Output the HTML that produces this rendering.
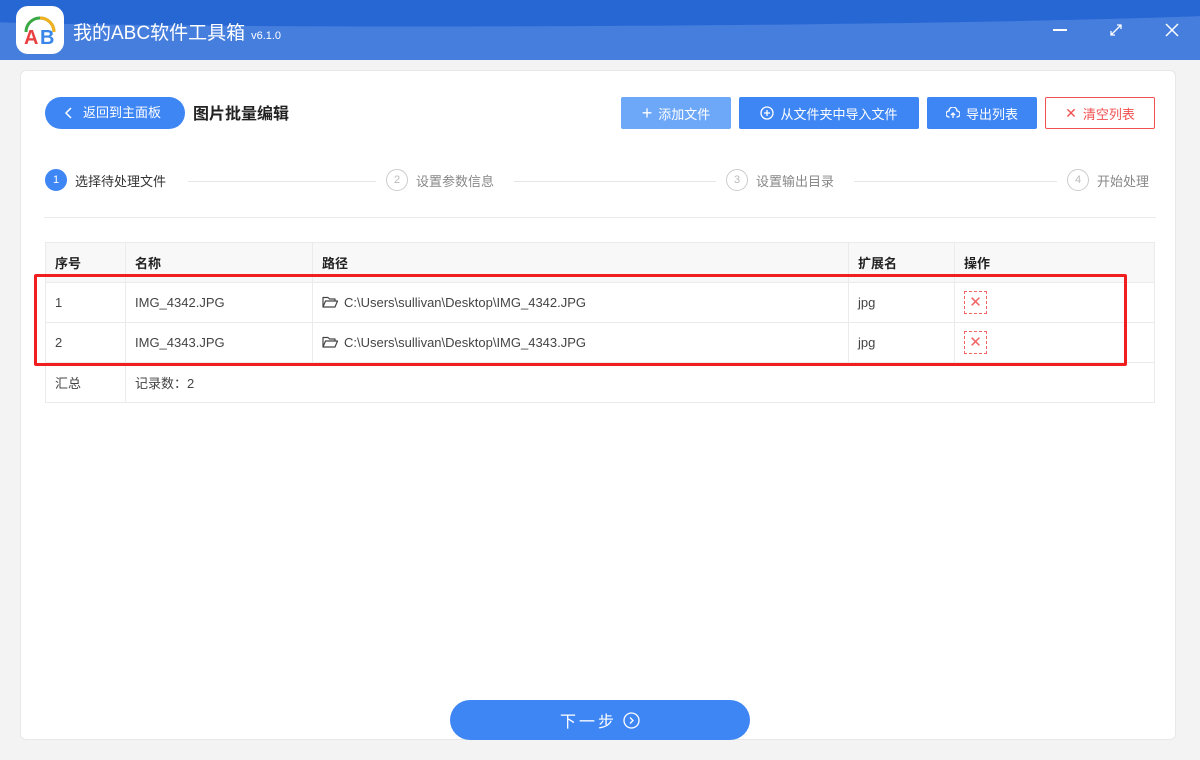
<!DOCTYPE html>
<html><head><meta charset="utf-8"><style>
*{margin:0;padding:0;box-sizing:border-box}
body{width:1200px;height:760px;background:#f3f3f3;font-family:"Liberation Sans","Noto Sans CJK SC",sans-serif;position:relative;overflow:hidden;font-size:13px;color:#333}
.hdr{position:absolute;left:0;top:0;width:1200px;height:60px;background:#467edd;overflow:hidden}
.hdr .band{position:absolute;left:-100px;top:-60px;width:1400px;height:86px;background:#2767d4;border-radius:0 0 50% 50%/0 0 14px 14px;transform:rotate(-0.3deg)}
.logo{position:absolute;left:16px;top:6px;width:48px;height:48px;background:#fff;border-radius:12px}
.title{position:absolute;left:73px;top:18px;color:#fff;font-size:19px}
.ver{font-size:11px;margin-left:6px}
.panel{position:absolute;left:20px;top:70px;width:1156px;height:670px;background:#fff;border:1px solid #e8e8e8;border-radius:6px}
.abs{position:absolute}
.btn{position:absolute;height:32px;top:97px;color:#fff;font-size:13px;display:flex;align-items:center;justify-content:center;border-radius:2px;gap:6px}
.step{position:absolute;top:169px;display:flex;align-items:center;gap:8px;color:#888;font-size:13px}
.circ{width:22px;height:22px;border-radius:50%;border:1px solid #ccc;color:#bbb;font-size:11px;display:flex;align-items:center;justify-content:center}
.line{position:absolute;top:181px;height:1px;background:#e6e6e6}
table{position:absolute;left:45px;top:242px;width:1110px;border-collapse:collapse}
td{border:1px solid #ebebeb;height:40px;padding-left:9px;font-size:13px;color:#444}
tr.h td{background:#f8f8f8;font-weight:bold;color:#222}
.del{display:inline-block;width:23px;height:23px;border:1px dashed #f06464;color:#f06464;text-align:center;line-height:21px;font-size:15px;vertical-align:middle}
.fold{display:inline-block;vertical-align:-1px;margin-right:6px}
</style></head><body>
<div class="hdr"><div class="band"></div></div>
<div class="logo"><svg width="48" height="48" viewBox="0 0 48 48"><path d="M10 26 A14 14 0 0 1 38 26" fill="none" stroke="#3aa844" stroke-width="3"/><path d="M24 12 A14 14 0 0 1 38 26" fill="none" stroke="#f2b01e" stroke-width="3"/><text x="8" y="38" font-size="20" font-weight="bold" fill="#e94040" font-family="Liberation Sans">A</text><text x="24" y="38" font-size="20" font-weight="bold" fill="#3a86e8" font-family="Liberation Sans">B</text></svg></div>
<div class="title">我的ABC软件工具箱<span class="ver">v6.1.0</span></div>
<div class="abs" style="left:1053px;top:29px;width:14px;height:1.5px;background:#fff"></div>
<svg class="abs" style="left:1108px;top:22px" width="16" height="16" viewBox="0 0 16 16"><path d="M3 13L13 3M9 3h4v4M3 9v4h4" stroke="#fff" stroke-width="1.3" fill="none"/></svg>
<svg class="abs" style="left:1165px;top:23px" width="14" height="14"><path d="M1 1L13 13M13 1L1 13" stroke="#fff" stroke-width="1.5"/></svg>
<div class="panel"></div>
<div class="abs" style="left:45px;top:97px;width:140px;height:32px;background:#3f86f5;border-radius:16px;color:#fff;font-size:13px;line-height:32px;padding-left:38px">返回到主面板</div>
<svg class="abs" style="left:64px;top:106px" width="10" height="14"><path d="M7 2L2 7L7 12" stroke="#fff" stroke-width="1.5" fill="none"/></svg>
<div class="abs" style="left:193px;top:100px;font-size:16px;font-weight:bold;color:#222">图片批量编辑</div>
<div class="btn" style="left:621px;width:110px;background:#6da7f8"><span style="font-size:18px;line-height:18px">+</span> 添加文件</div>
<div class="btn" style="left:739px;width:180px;background:#3f86f5"><svg width="14" height="14"><circle cx="7" cy="7" r="6" stroke="#fff" stroke-width="1.3" fill="none"/><path d="M7 4v6M4 7h6" stroke="#fff" stroke-width="1.3"/></svg> 从文件夹中导入文件</div>
<div class="btn" style="left:927px;width:110px;background:#3f86f5"><svg width="14" height="12"><path d="M3.5 10H3a3 3 0 0 1 0-6 4 4 0 0 1 8 0 3 3 0 0 1 0 6h-0.5M7 11V6M5 8l2-2 2 2" stroke="#fff" stroke-width="1.3" fill="none"/></svg> 导出列表</div>
<div class="btn" style="left:1045px;width:110px;background:#fff;border:1px solid #f05050;color:#f05050"><span style="font-size:14px">✕</span> 清空列表</div>
<div class="step" style="left:45px;color:#333"><div class="circ" style="background:#3f86f5;border-color:#3f86f5;color:#fff">1</div>选择待处理文件</div>
<div class="line" style="left:188px;width:188px"></div>
<div class="step" style="left:386px"><div class="circ">2</div>设置参数信息</div>
<div class="line" style="left:514px;width:202px"></div>
<div class="step" style="left:726px"><div class="circ">3</div>设置输出目录</div>
<div class="line" style="left:854px;width:203px"></div>
<div class="step" style="left:1067px"><div class="circ">4</div>开始处理</div>
<div class="abs" style="left:44px;top:217px;width:1112px;height:1px;background:#ebebeb"></div>
<table>
<tr class="h"><td style="width:80px">序号</td><td style="width:187px">名称</td><td style="width:536px">路径</td><td style="width:106px">扩展名</td><td>操作</td></tr>
<tr><td>1</td><td>IMG_4342.JPG</td><td><svg class="fold" width="16" height="12"><path d="M1 11V1.5h5l1.5 1.5H13V5M1 11l2.5-6H15.5L13 11Z" stroke="#444" stroke-width="1.2" fill="none" stroke-linejoin="round"/></svg>C:\Users\sullivan\Desktop\IMG_4342.JPG</td><td>jpg</td><td><span class="del">✕</span></td></tr>
<tr><td>2</td><td>IMG_4343.JPG</td><td><svg class="fold" width="16" height="12"><path d="M1 11V1.5h5l1.5 1.5H13V5M1 11l2.5-6H15.5L13 11Z" stroke="#444" stroke-width="1.2" fill="none" stroke-linejoin="round"/></svg>C:\Users\sullivan\Desktop\IMG_4343.JPG</td><td>jpg</td><td><span class="del">✕</span></td></tr>
<tr><td>汇总</td><td colspan="4" style="border-right:1px solid #ebebeb">记录数：2</td></tr>
</table>
<div class="abs" style="left:34px;top:274px;width:1093px;height:92px;border:3px solid #f01e1e;border-radius:2px"></div>
<div class="abs" style="left:450px;top:700px;width:300px;height:40px;background:#3f86f5;border-radius:20px;color:#fff;font-size:16px;display:flex;align-items:center;justify-content:center;gap:6px;letter-spacing:3px">下一步<svg width="17" height="17"><circle cx="8.5" cy="8.5" r="7.5" stroke="#fff" stroke-width="1.3" fill="none"/><path d="M7 5.5l3 3-3 3" stroke="#fff" stroke-width="1.3" fill="none"/></svg></div>
</body></html>
